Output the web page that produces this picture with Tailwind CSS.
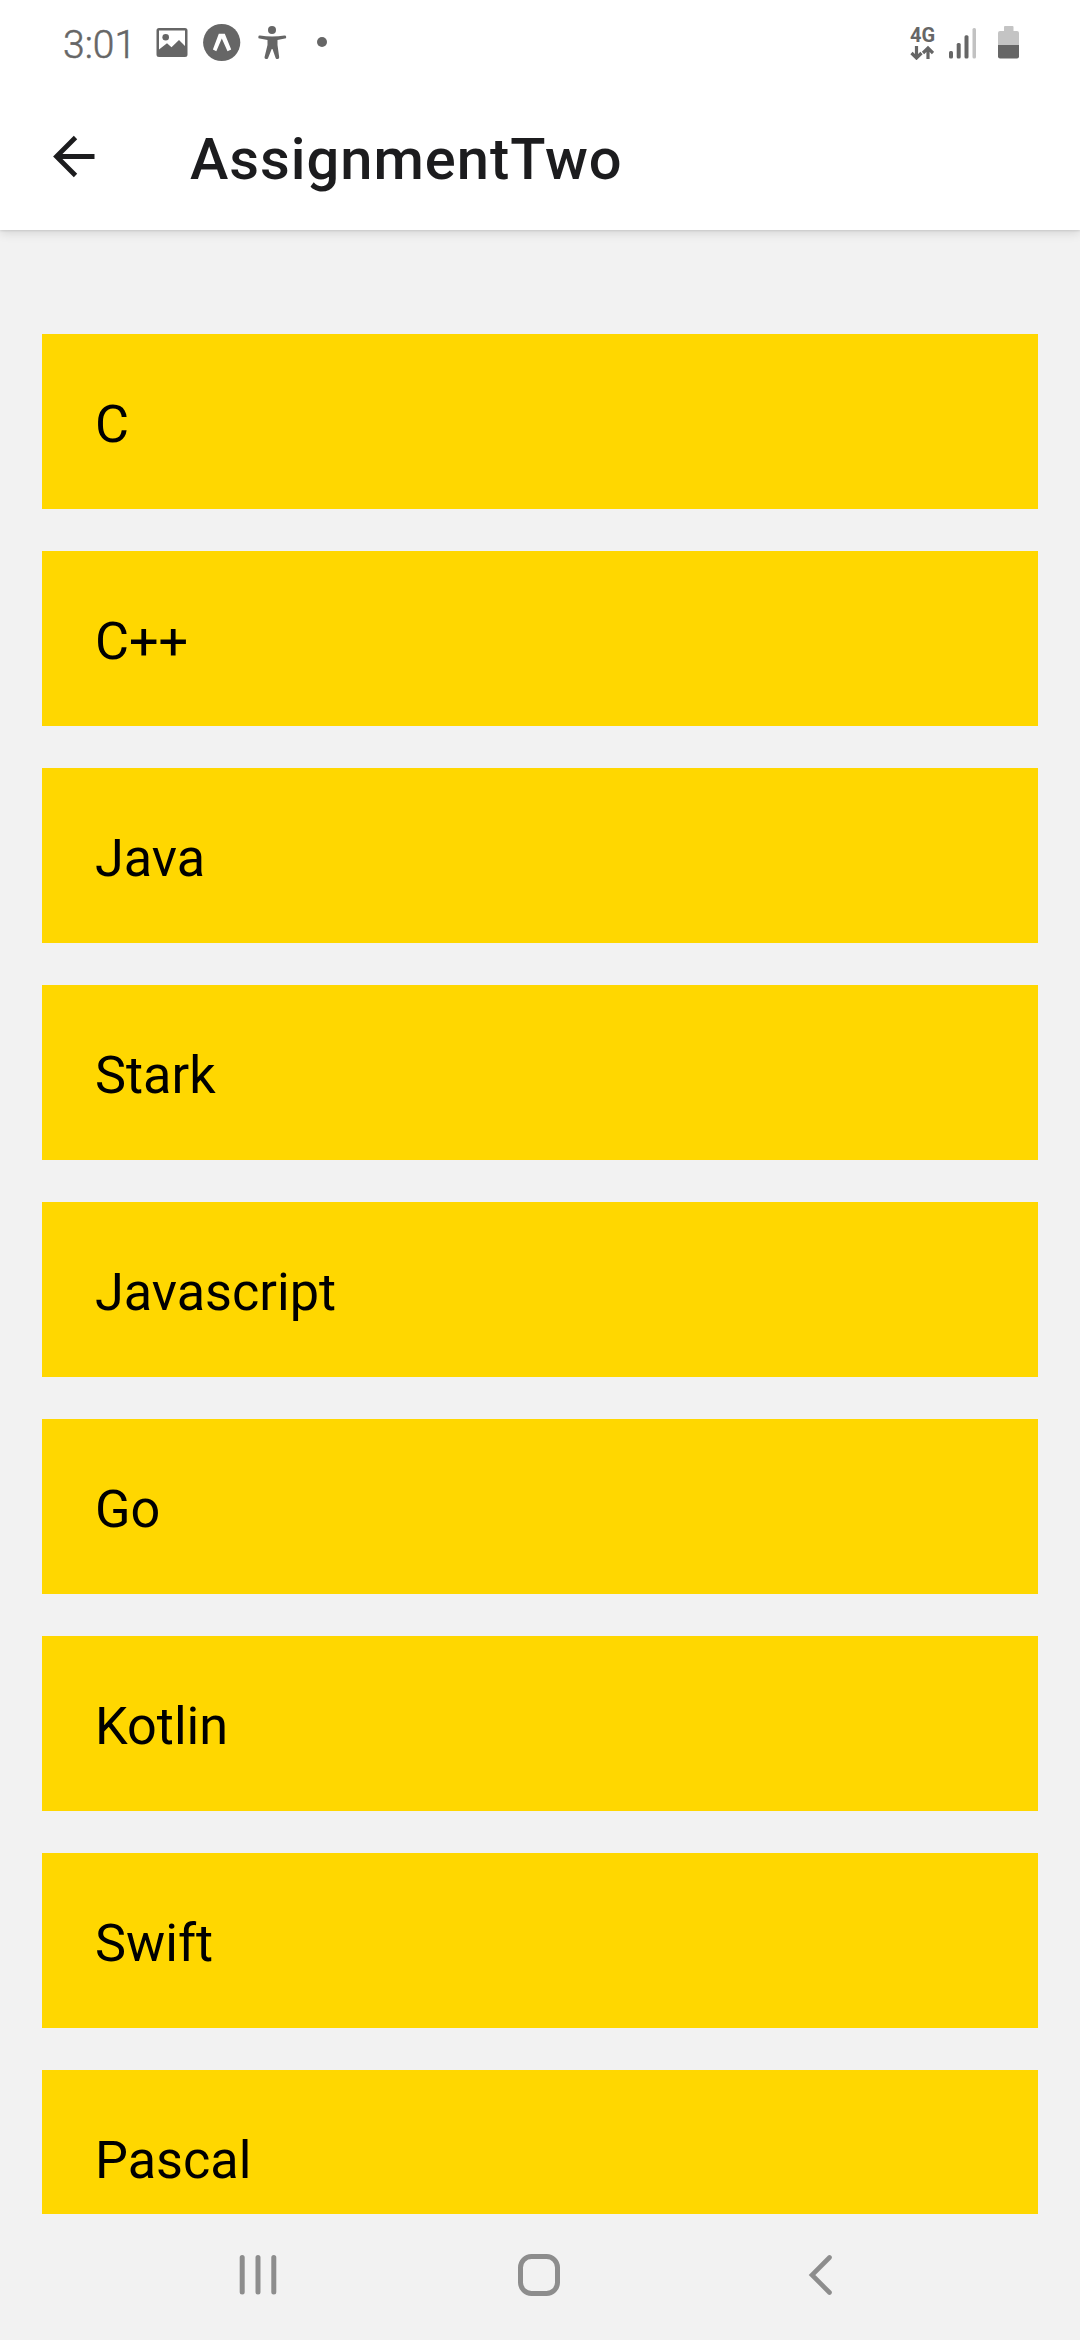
<!DOCTYPE html>
<html lang="en">
<head>
<meta charset="utf-8">
<title>AssignmentTwo</title>
<script src="https://cdn.jsdelivr.net/npm/@tailwindcss/browser@4"></script>
</head>
<body class="bg-[#f2f2f2] font-['Roboto',sans-serif]">
<div class="flex h-[2340px] w-[1080px] flex-col overflow-hidden">
  <header class="z-10 h-[230px] shrink-0 bg-white shadow-[0_1px_2px_rgba(0,0,0,0.1),0_3px_10px_rgba(0,0,0,0.12)]">
    <!-- status bar -->
    <div class="flex h-[84px] items-center justify-between pl-[63px] pr-[60px] text-[#666]">
      <div class="flex items-center">
        <span class="mt-[5px] w-[93px] text-[39px] leading-[46px] font-light [-webkit-text-stroke:0.5px_#666]">3:01</span>
        <svg class="h-[84px] w-[184px]" viewBox="156 0 184 84" fill="currentColor">
          <path fill-rule="evenodd" d="M159 28h26a2.500 2.500 0 0 1 2.500 2.500V54.500a2.500 2.500 0 0 1-2.500 2.500H159a2.500 2.500 0 0 1-2.500-2.500V30.500A2.500 2.500 0 0 1 159 28Zm0 2.500V49.500L167 43.200l4.500 4.100 7.500-7.300 6 6V30.500Z"/>
          <circle cx="165.700" cy="37.200" r="3.300"/>
          <circle cx="221.700" cy="42.500" r="18.600"/>
          <path fill="#fff" d="M218.800 33.700h6L231.200 49.500l-3.700 1.700L221.800 38.500l-5.500 12.700-3.400-1.700Z"/>
          <circle cx="272" cy="30" r="4"/>
          <path d="M260 35.600Q272 37.600 284.500 35.600a1.500 1.500 0 0 1 .4 3L277.500 40V45L279.200 57.200a1.900 1.900 0 0 1-3.500 1L272.500 49h-.8L268 58.200a1.900 1.900 0 0 1-3.500-1L267.500 45V40L259.600 38.600a1.500 1.500 0 0 1 .4-3Z"/>
          <circle cx="322" cy="42" r="5"/>
        </svg>
      </div>
      <div class="flex items-center">
        <div class="flex w-[38px] flex-col">
          <span class="text-[20px] leading-[20px] font-bold">4G</span>
          <svg class="h-[15px] w-[24px]" viewBox="0 0 24 15" fill="none" stroke="currentColor" stroke-width="3.200"><path d="M6.500 1v11M1.500 8l5 5 5-5M18 14V3M13 8l5-5 5 5"/></svg>
        </div>
        <svg class="h-[84px] w-[72px]" viewBox="948 0 72 84" fill="currentColor">
          <rect x="949" y="51" width="4" height="7.500" rx="1.500"/>
          <rect x="956.700" y="43" width="4" height="15.500" rx="1.500"/>
          <rect x="964.500" y="35.300" width="4" height="23.200" rx="1.500"/>
          <rect x="972.500" y="28" width="3.500" height="30.500" rx="1.500" fill="#c2c2c2"/>
          <path fill="#c4c4c4" d="M1004 27a1 1 0 0 1 1-1h7.500a1 1 0 0 1 1 1v4h3.500a2 2 0 0 1 2 2v12h-21V33a2 2 0 0 1 2-2h4Z"/>
          <path d="M998 45h21V56.500a2 2 0 0 1-2 2h-17a2 2 0 0 1-2-2Z"/>
        </svg>
      </div>
    </div>
    <!-- app bar -->
    <div class="flex h-[146px] items-start pl-[52px] pt-[42px] text-[#1c1c1e]">
      <svg class="mt-[8px] h-[44px] w-[138px] shrink-0" viewBox="52 134 138 44" fill="none" stroke="currentColor" stroke-width="4.800"><path d="M94.500 156.500H57M75.500 137.500 56.500 156.500 75.500 175.500"/></svg>
      <h1 class="text-[57.800px] leading-[66px] font-medium tracking-[1px]">AssignmentTwo</h1>
    </div>
  </header>

  <main class="min-h-0 flex-1 overflow-hidden px-[42px] pt-[104px]">
    <ul class="flex flex-col gap-[42px] text-[52.200px] leading-[68px] text-black">
      <li class="h-[175px] bg-[#ffd700] px-[53px] pt-[57px]">C</li>
      <li class="h-[175px] bg-[#ffd700] px-[53px] pt-[57px]">C++</li>
      <li class="h-[175px] bg-[#ffd700] px-[53px] pt-[57px]">Java</li>
      <li class="h-[175px] bg-[#ffd700] px-[53px] pt-[57px]">Stark</li>
      <li class="h-[175px] bg-[#ffd700] px-[53px] pt-[57px]">Javascript</li>
      <li class="h-[175px] bg-[#ffd700] px-[53px] pt-[57px]">Go</li>
      <li class="h-[175px] bg-[#ffd700] px-[53px] pt-[57px]">Kotlin</li>
      <li class="h-[175px] bg-[#ffd700] px-[53px] pt-[57px]">Swift</li>
      <li class="h-[175px] bg-[#ffd700] px-[53px] pt-[57px]">Pascal</li>
    </ul>
  </main>

  <!-- system navigation -->
  <nav class="h-[126px] shrink-0 bg-[#f2f2f2]">
    <svg class="h-[126px] w-[1080px]" viewBox="0 2214 1080 126" fill="none" stroke="#8d8d8d" stroke-width="5" stroke-linecap="round" stroke-linejoin="round">
      <path d="M242.200 2257.500v34.500M258 2257.500v34.500M273.800 2257.500v34.500"/>
      <rect x="520.500" y="2256.500" width="37" height="37" rx="11"/>
      <path stroke-linejoin="miter" stroke-width="4.600" d="M829.500 2257.500 812 2275l17.500 17.500"/>
    </svg>
  </nav>
</div>
</body>
</html>
